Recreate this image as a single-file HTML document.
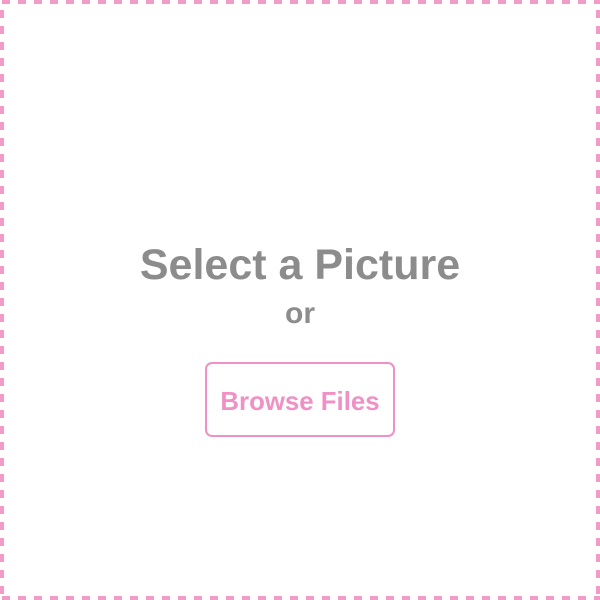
<!DOCTYPE html>
<html><head><style>
html,body{margin:0;padding:0;background:#fff;width:600px;height:600px;overflow:hidden;font-family:"Liberation Sans",Arial,sans-serif;}
svg.b{position:absolute;left:0;top:0}
.t{position:absolute;left:0;width:600px;text-align:center;font-weight:bold;color:#8c8c8c}
.btn{position:absolute;left:205px;top:362px;width:186px;height:71px;border:2px solid #f090c4;border-radius:7px;color:#f090c4;font-weight:bold;font-size:25.8px;text-align:center;line-height:76px}
</style></head><body>
<svg class="b" width="600" height="600">
<g stroke="#f39bc8" stroke-width="4" stroke-dasharray="8 8">
<line x1="2" y1="2" x2="600" y2="2"/>
<line x1="2" y1="598" x2="600" y2="598"/>
<line x1="2" y1="10" x2="2" y2="600"/>
<line x1="598" y1="10" x2="598" y2="600"/>
</g>
</svg>
<div class="t" style="top:240px;font-size:43px;line-height:50px">Select a Picture</div>
<div class="t" style="top:296px;font-size:30px;line-height:36px">or</div>
<div class="btn">Browse Files</div>
</body></html>
